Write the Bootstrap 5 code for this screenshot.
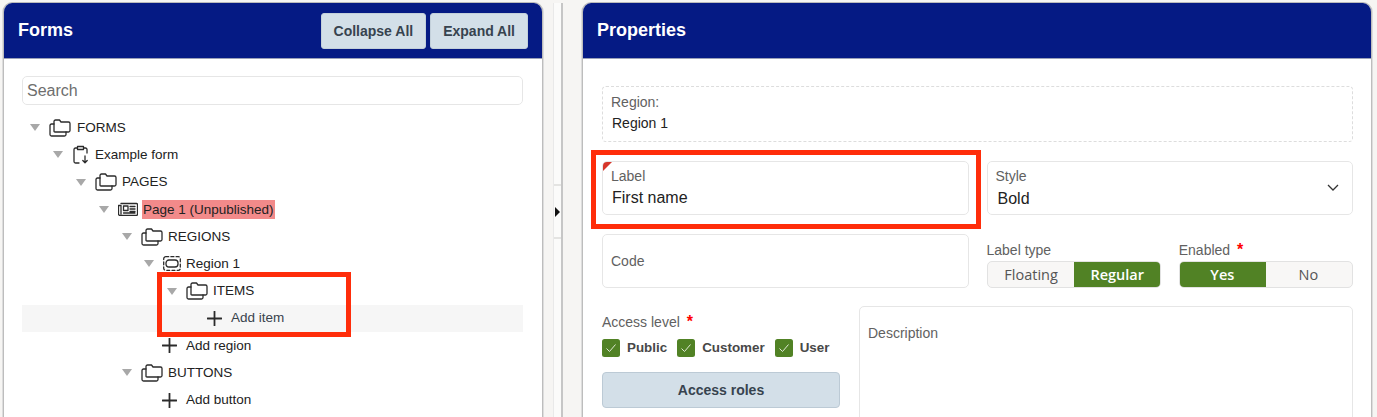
<!DOCTYPE html>
<html lang="en"><head><meta charset="utf-8"><title>Forms</title>
<link rel="stylesheet" href="https://cdn.jsdelivr.net/npm/bootstrap@5.3.0/dist/css/bootstrap.min.css">
<style>
html,body{height:417px;overflow:hidden}
body{background:#f6f5f3;font-family:"Liberation Sans",Arial,sans-serif;color:#222;position:relative}
.shell{height:417px;padding:3px 5px 0 3px;overflow:hidden}
.pane{background:#fff;border:solid #bdbdbd;border-width:0 1px;border-radius:9px 9px 0 0;height:440px;overflow:hidden;box-shadow:0 -1px 0 #bbb,-1px 0 0 #ddd,1px 0 0 #ddd}
.pane-l{width:540px;flex:none}
.pane-r{flex:1;min-width:0}
.pane-head{background:#051a84;height:56px;padding:0 14px;border-bottom:1px solid #9aa0b8;color:#fff}
.pane-title{font-size:18px;font-weight:700;margin:0}
.head-btn{background:#d3dfe8;border:1px solid #c3d0da;color:#37434f;font-size:14px;font-weight:700;border-radius:3px;height:36px;padding:0 12px;line-height:1}
.split{width:39px;flex:none;padding-left:10px}
.split-bar{width:10px;height:100%;background:#fbfbfa;border-left:1px solid #e9e9e9;border-right:2px solid #c6c6c6;padding-top:181px}
.split-grip{height:55px;border:solid #e4e4e2;border-width:2px 0;display:flex;align-items:center}
.split-arrow{width:0;height:0;border-style:solid;border-width:5px 0 5px 5px;border-color:transparent transparent transparent #111;margin-left:1px}
.tree-wrap{padding:17px 19px 0 18px}
.search-in{display:block;width:100%;height:29px;border:1px solid #e6e6e6;border-radius:5px;padding:0 4px;font-size:16px;color:#222;outline:0;font-family:inherit}
.search-in::placeholder{color:#6e6e6e;opacity:1}
.tree-list{list-style:none;margin:9px 0 0;padding:0}
.tree-row{height:27.25px;display:flex;align-items:center;font-size:13.500px;color:#222;white-space:nowrap}
.tree-row.hl{background:#f6f6f6}
.l0{padding-left:8px}.l1{padding-left:31px}.l2{padding-left:54px}.l3{padding-left:77px}.l4{padding-left:100px}.l5{padding-left:122px}.l6{padding-left:145px}
.tri{width:0;height:0;border-style:solid;border-width:7px 5px 0;border-color:#a8a8a8 transparent transparent;flex:none;margin-right:9px}
.ic{flex:none;fill:none;stroke:#2b2b2b;stroke-width:1.3;stroke-linejoin:round;stroke-linecap:round;margin-right:5px}
.ic-form{margin:0 7px 0 1px}
.ic-fold-first{margin-right:6px}
.add-ic{margin-right:9px}
.add-a{margin-left:185px}
.add-b{margin-left:140px}
.page-tag{background:#f28a8a;padding:0 1px;line-height:19px;margin-left:-1px}
.add-txt{color:#39434d}
.prop-body{padding:27px 18px 0 19px}
.ro-box{border:1px dashed #ddd;border-radius:4px;height:56px;padding:7px 8px;font-size:14px;margin-bottom:19px}
.cap{font-size:14px;color:#616161;line-height:17px}
.ro-val{margin-top:2px;line-height:20px;padding-left:1px}
.field-row{--bs-gutter-x:18px;--bs-gutter-y:0;margin-bottom:19px}
.fbox{position:relative;height:54px;border:1px solid #e6e6e6;border-radius:5px;padding:6px 8px 0;background:#fff}
.fval{font-size:16px;line-height:20px;margin-top:3px;padding-left:1px}
.fval-b{padding-left:2px;margin-top:4px}
.corner{position:absolute;left:0;top:0;width:0;height:0;border-style:solid;border-width:9px 9px 0 0;border-color:#d6362a transparent transparent transparent;border-top-left-radius:4px}
.chev{position:absolute;right:13px;top:22px;fill:none;stroke:#333;stroke-width:1.3}
.code-txt{line-height:52px;margin-top:-6px}
.seg-cap{line-height:17px;height:19px;margin-top:6px}
.seg-cap-box{padding-top:2px}
.req{color:#f00;font-weight:700;margin-left:3px;font-size:16px;line-height:1}
.seg{display:flex;height:27px;font-family:"Open Sans",sans-serif;font-size:14.500px;border-radius:5px;overflow:hidden;border:1px solid #e2e2e2;background:#f8f7f6;color:#555}
.seg span{flex:1;display:flex;align-items:center;justify-content:center;line-height:1;padding-top:1px}
.seg .on{background:#518225;color:#fff;font-weight:600;margin:-1px}
.lower{gap:19px;margin-top:-1px}
.access{width:238px;flex:none;padding-top:8px}
.checks{gap:10px;margin-top:4px;height:26px}
.chk{display:flex;align-items:center;gap:7px;font-size:13.400px;font-weight:700;color:#484848}
.chk svg{flex:none}
.role-btn{display:block;width:100%;height:36px;margin-top:11px;background:#d3dfe8;border:1px solid #bccad5;border-radius:4px;color:#37434f;font-size:14px;font-weight:700}
.desc{flex:1;height:140px;border:1px solid #e6e6e6;border-radius:5px;padding:18px 8px}
.mark-a,.mark-b{position:absolute;border:5px solid #ff2d0a;pointer-events:none}
.mark-a{left:157px;top:272px;width:194px;height:65px}
.mark-b{left:591px;top:150px;width:390px;height:79px}
</style></head>
<body>
<svg width="0" height="0" class="d-block position-absolute"><defs>
<symbol id="folder" viewBox="0 0 22 18"><path d="M5 12.500V2.500A1.500 1.500 0 0 1 6.500 1H10.500L12 3H19.500A1.500 1.500 0 0 1 21 4.500V11.500A1.500 1.500 0 0 1 19.500 13H6Q5 13 5 12.500Z"/><path d="M5 5H2.500A1.500 1.500 0 0 0 1 6.500V15.500A1.500 1.500 0 0 0 2.500 17H15.500A1.500 1.500 0 0 0 17 15.500V13"/></symbol>
<symbol id="addp" viewBox="0 0 15 15"><path d="M7.500 0.500V14.500M0.500 7.500H14.500" stroke-width="1.800"/></symbol>
<symbol id="tick" viewBox="0 0 18 18"><rect width="18" height="18" rx="2.500" fill="#518225"/><path d="M4.500 9.500L7.500 12.500L13.500 5.500" fill="none" stroke="#dfe9d5" stroke-width="1"/></symbol>
</defs></svg>
<div class="shell d-flex">
  <section class="pane pane-l">
    <header class="pane-head d-flex align-items-center justify-content-between">
      <h2 class="pane-title">Forms</h2>
      <div class="d-flex gap-1"><button class="head-btn" type="button">Collapse All</button><button class="head-btn" type="button">Expand All</button></div>
    </header>
    <div class="tree-wrap">
      <input class="search-in" type="text" placeholder="Search">
      <ul class="tree-list">
        <li class="tree-row l0"><i class="tri"></i><svg class="ic ic-fold-first" width="22" height="18"><use href="#folder"/></svg><span>FORMS</span></li>
        <li class="tree-row l1"><i class="tri"></i><svg class="ic ic-form" width="15" height="19" viewBox="0 0 15 19"><path d="M4 3H2.500A1.500 1.500 0 0 0 1 4.500V16.500A1.500 1.500 0 0 0 2.500 18H6M11 3H12.500A1.500 1.500 0 0 1 14 4.500V8M4.500 1.500H10.500V4.500H4.500ZM12 11V17.500M9.800 15.500L12 17.800L14.200 15.500"/></svg><span>Example form</span></li>
        <li class="tree-row l2"><i class="tri"></i><svg class="ic" width="22" height="18"><use href="#folder"/></svg><span>PAGES</span></li>
        <li class="tree-row l3"><i class="tri"></i><svg class="ic" width="20" height="14" viewBox="0 0 20 14"><path d="M3 1.500H18.500A1 1 0 0 1 19.500 2.500V12A1.500 1.500 0 0 1 18 13.500H2A1.500 1.500 0 0 1 0.500 12V3.500H3V12M5.500 4H10V8.500H5.500ZM12 4.500H17M12 7H17M12 9.500H17M5.500 11H17"/></svg><span class="page-tag">Page 1 (Unpublished)</span></li>
        <li class="tree-row l4"><i class="tri"></i><svg class="ic" width="22" height="18"><use href="#folder"/></svg><span>REGIONS</span></li>
        <li class="tree-row l5"><i class="tri"></i><svg class="ic" width="18" height="15" viewBox="0 0 18 15"><rect x="0.700" y="0.700" width="16.600" height="13.600" rx="2" stroke-dasharray="3 2.200"/><rect x="3" y="4" width="12" height="7" rx="3"/></svg><span>Region 1</span></li>
        <li class="tree-row l6"><i class="tri"></i><svg class="ic" width="22" height="18"><use href="#folder"/></svg><span>ITEMS</span></li>
        <li class="tree-row hl"><svg class="ic add-ic add-a" width="15" height="15"><use href="#addp"/></svg><span class="add-txt">Add item</span></li>
        <li class="tree-row"><svg class="ic add-ic add-b" width="15" height="15"><use href="#addp"/></svg><span>Add region</span></li>
        <li class="tree-row l4"><i class="tri"></i><svg class="ic" width="22" height="18"><use href="#folder"/></svg><span>BUTTONS</span></li>
        <li class="tree-row"><svg class="ic add-ic add-b" width="15" height="15"><use href="#addp"/></svg><span>Add button</span></li>
      </ul>
    </div>
  </section>
  <div class="split"><div class="split-bar"><div class="split-grip"><i class="split-arrow"></i></div></div></div>
  <section class="pane pane-r">
    <header class="pane-head d-flex align-items-center"><h2 class="pane-title">Properties</h2></header>
    <div class="prop-body">
      <div class="ro-box"><div class="cap">Region:</div><div class="ro-val">Region 1</div></div>
      <div class="row field-row">
        <div class="col-6"><div class="fbox"><i class="corner"></i><div class="cap">Label</div><div class="fval">First name</div></div></div>
        <div class="col-6"><div class="fbox"><div class="cap">Style</div><div class="fval fval-b">Bold</div><svg class="chev" width="12" height="7" viewBox="0 0 12 7"><path d="M1 1L6 6L11 1"/></svg></div></div>
      </div>
      <div class="row field-row">
        <div class="col-6"><div class="fbox"><div class="cap code-txt">Code</div></div></div>
        <div class="col-3 seg-cap-box"><div class="cap seg-cap">Label type</div><div class="seg"><span>Floating</span><span class="on">Regular</span></div></div>
        <div class="col-3 seg-cap-box"><div class="cap seg-cap">Enabled <span class="req">*</span></div><div class="seg"><span class="on">Yes</span><span>No</span></div></div>
      </div>
      <div class="d-flex lower">
        <div class="access">
          <div class="cap">Access level <span class="req">*</span></div>
          <div class="d-flex checks">
            <label class="chk"><svg width="18" height="18"><use href="#tick"/></svg>Public</label>
            <label class="chk"><svg width="18" height="18"><use href="#tick"/></svg>Customer</label>
            <label class="chk"><svg width="18" height="18"><use href="#tick"/></svg>User</label>
          </div>
          <button class="role-btn" type="button">Access roles</button>
        </div>
        <div class="desc cap">Description</div>
      </div>
    </div>
  </section>
</div>
<div class="mark-a"></div><div class="mark-b"></div>
<script src="https://cdn.jsdelivr.net/npm/bootstrap@5.3.0/dist/js/bootstrap.bundle.min.js"></script>
</body></html>
